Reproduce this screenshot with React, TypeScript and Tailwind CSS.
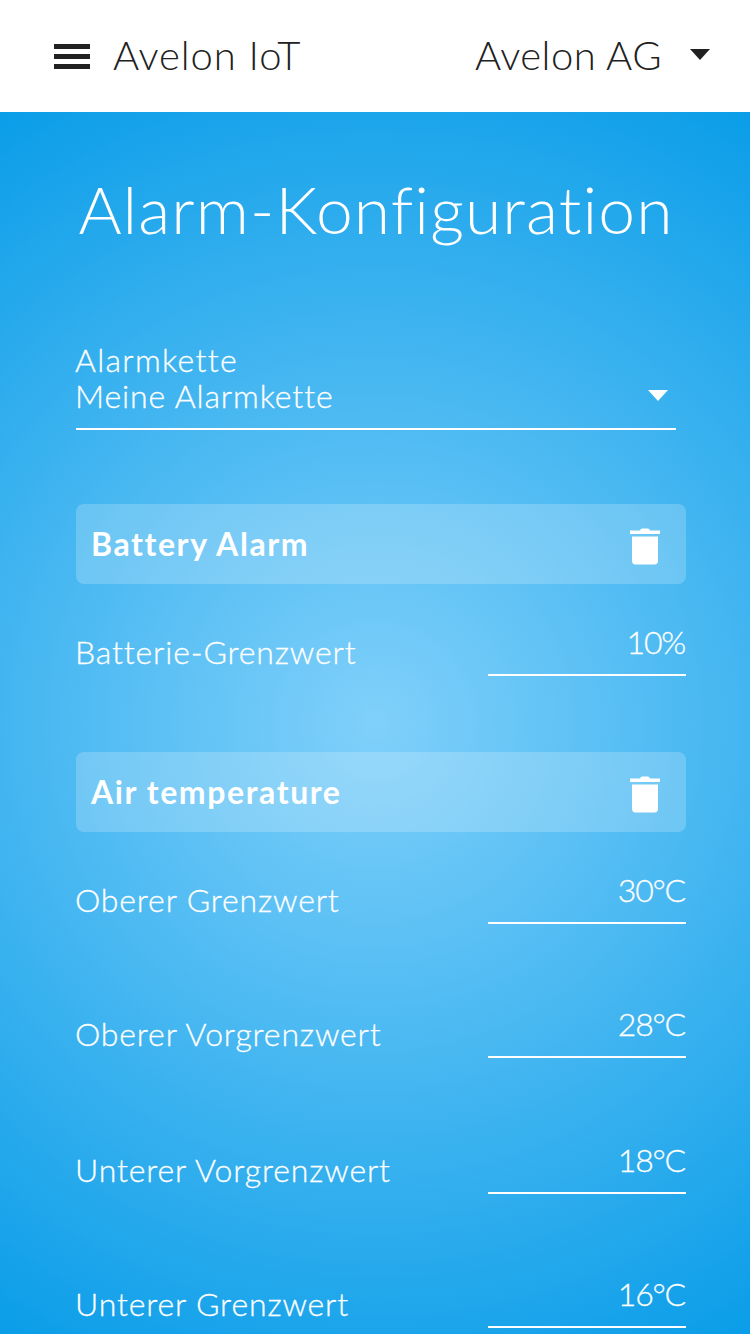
const font = "font-['Lato','Noto_Sans',sans-serif]";

function Caret(props: { className: string }) {
  return (
    <svg className={props.className} width="20" height="12" viewBox="0 0 20 12">
      <path d="M0 0h20L10 11z" fill="currentColor" />
    </svg>
  );
}

function Trash() {
  return (
    <svg className="mt-1" width="30" height="37" viewBox="0 0 30 37" fill="white">
      <path d="M10 2.500C10.500 1 11.500 0.500 13 0.500h4c1.500 0 2.500 0.500 3 2h10v3.500H0V2.500z" />
      <path d="M2 8.500h26V33c0 2.200-1.300 3.500-3.500 3.500h-19C3.300 36.500 2 35.200 2 33z" />
    </svg>
  );
}

function SectionHeader(props: { title: string }) {
  return (
    <div className="flex h-20 w-[610px] items-center justify-between rounded-lg bg-white/20 pl-[15px] pr-[26px]">
      <span className="text-[32px] font-bold tracking-[1.6px] text-white">{props.title}</span>
      <Trash />
    </div>
  );
}

function ValueRow(props: { label: string; value: string; className: string }) {
  return (
    <div className={`flex w-[610px] items-end justify-between [-webkit-text-stroke:0.3px_white] ${props.className}`}>
      <span className="mb-[4px] -ml-px text-[32px] leading-10 font-light tracking-[0.85px]">{props.label}</span>
      <div className="h-[60px] w-[198px] border-b-2 border-white pt-[6px] pr-px text-right text-[32px] leading-10 font-light tracking-[-1.2px]">
        {props.value}
      </div>
    </div>
  );
}

export default function App() {
  return (
    <div className={`h-[1334px] w-[750px] overflow-hidden bg-white ${font}`}>
      <header className="flex h-28 items-center justify-between pr-10 pl-[54px] pb-[2px] text-[#212121]">
        <div className="flex items-center gap-[23px]">
          <div className="mt-[2px] flex w-9 flex-col gap-[5px]">
            <div className="h-[5px] bg-[#212121]" />
            <div className="h-[5px] bg-[#212121]" />
            <div className="h-[5px] bg-[#212121]" />
          </div>
          <span className="text-[40px] font-light tracking-[0.9px]">Avelon IoT</span>
        </div>
        <div className="flex items-center gap-[28px]">
          <span className="text-[40px] font-light tracking-[0.45px]">Avelon AG</span>
          <Caret className="text-[#212121]" />
        </div>
      </header>

      <main className="h-[1222px] overflow-hidden bg-[radial-gradient(circle_at_50%_50%,#80d0fa_0%,#0a9de8_100%)] pl-[76px] text-white">
        <h1 className="mt-[57px] w-[600px] text-center text-[66px] leading-20 font-light tracking-[1.1px]">
          Alarm-Konfiguration
        </h1>

        <div className="mt-[93px] w-[600px] border-b-2 border-white pb-[14px] [-webkit-text-stroke:0.3px_white]">
          <div className="-ml-px text-[32px] leading-9 font-light tracking-[1.3px]">Alarmkette</div>
          <div className="-ml-px flex items-center justify-between pr-2">
            <span className="text-[32px] leading-9 font-light tracking-[0.9px]">Meine Alarmkette</span>
            <Caret className="text-white" />
          </div>
        </div>

        <div className="mt-[74px]">
          <SectionHeader title="Battery Alarm" />
        </div>
        <ValueRow label="Batterie-Grenzwert" value="10%" className="mt-[32px]" />

        <div className="mt-[76px]">
          <SectionHeader title="Air temperature" />
        </div>
        <ValueRow label="Oberer Grenzwert" value="30°C" className="mt-[32px]" />
        <ValueRow label="Oberer Vorgrenzwert" value="28°C" className="mt-[74px]" />
        <ValueRow label="Unterer Vorgrenzwert" value="18°C" className="mt-[76px]" />
        <ValueRow label="Unterer Grenzwert" value="16°C" className="mt-[74px]" />
      </main>
    </div>
  );
}
